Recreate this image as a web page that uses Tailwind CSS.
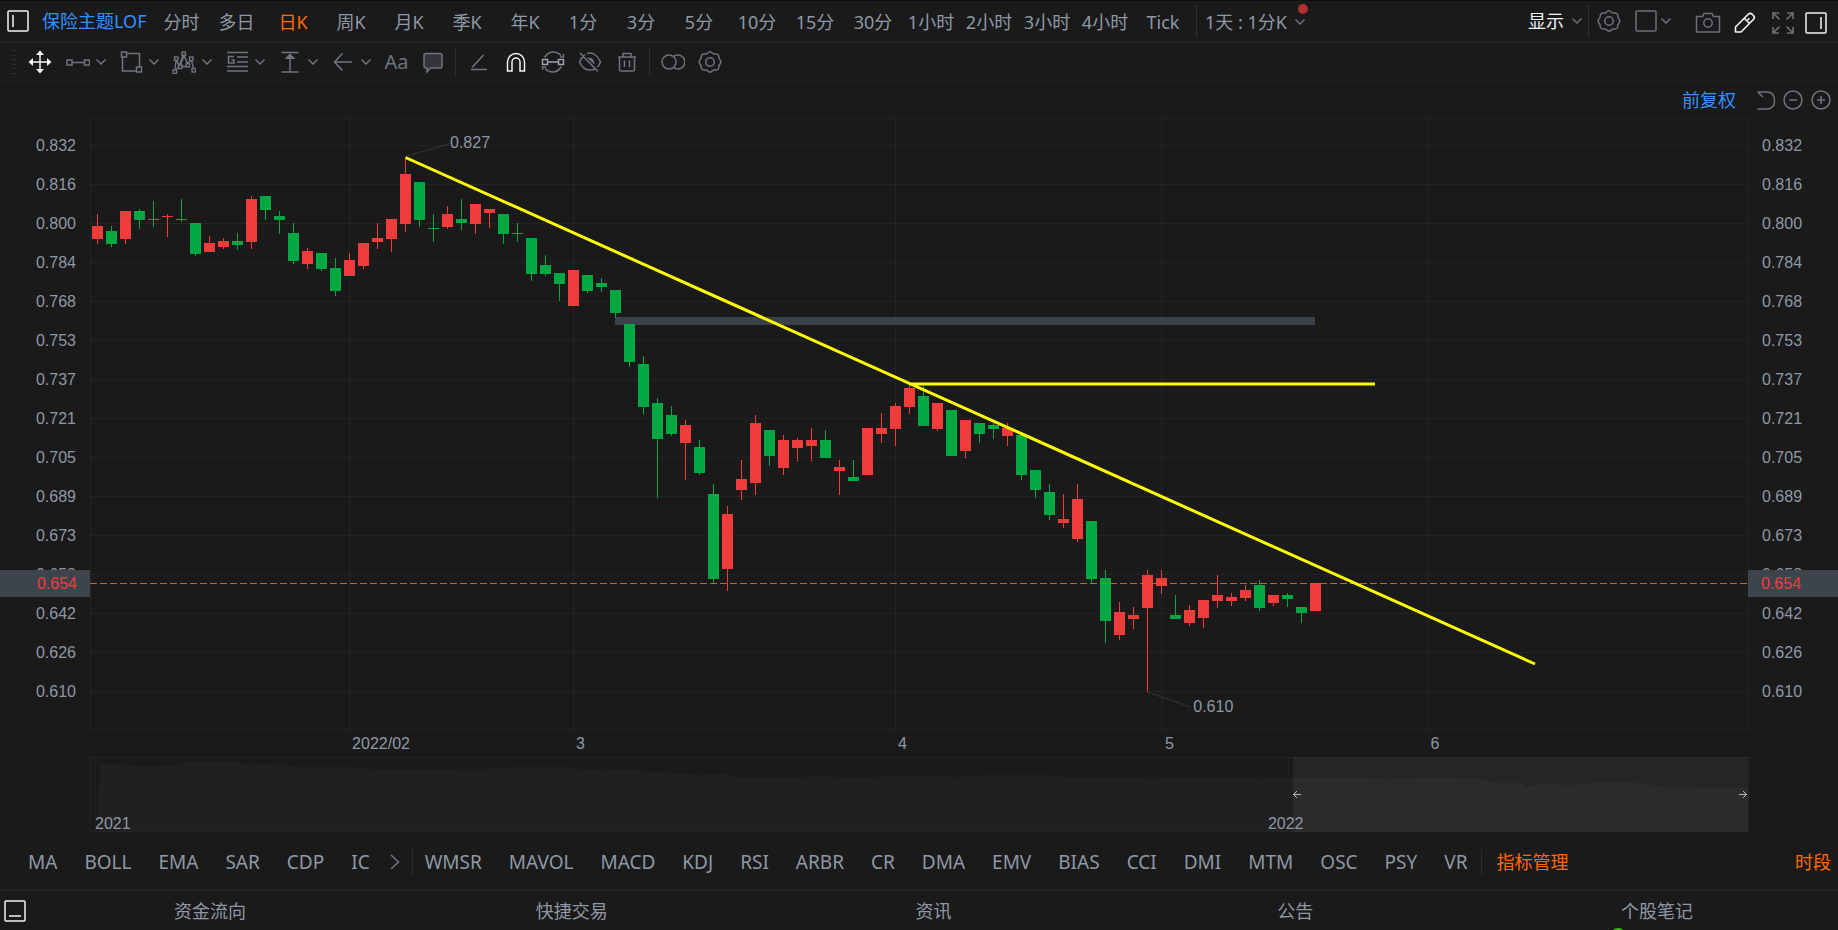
<!DOCTYPE html>
<html lang="zh-CN">
<head>
<meta charset="utf-8">
<title>保险主题LOF</title>
<script src="https://cdn.jsdelivr.net/npm/@tailwindcss/browser@4"></script>
</head>
<body class="min-h-screen overflow-x-hidden bg-[#1a1a1a] font-['Noto_Sans','Noto_Sans_CJK_SC',sans-serif] text-[18px] leading-6 text-[#8f98a5]">

<svg class="hidden" aria-hidden="true">
  <symbol id="chev" viewBox="0 0 10 6"><path d="M0.5 0.5 5 5 9.5 0.5" fill="none" stroke="currentColor" stroke-width="1.5"/></symbol>
  <symbol id="gear" viewBox="0 0 24 24"><g fill="none" stroke="currentColor" stroke-width="1.5"><circle cx="12" cy="12" r="4.2"/><path d="M9.6 3.2Q12 .4 14.4 3.2Q15.6 4.3 17.2 3.9Q20.6 3.6 20.8 7Q20.8 8.7 22 9.9Q23.6 12 22 14.1Q20.8 15.3 20.8 17Q20.6 20.4 17.2 20.1Q15.6 19.7 14.4 20.8Q12 23.6 9.6 20.8Q8.4 19.7 6.8 20.1Q3.4 20.4 3.2 17Q3.2 15.3 2 14.1Q.4 12 2 9.9Q3.2 8.7 3.2 7Q3.4 3.6 6.8 3.9Q8.4 4.3 9.6 3.2Z"/></g></symbol>
</svg>

<header class="flex h-[43px] items-center border-t border-b-2 border-t-[#0e0e0e] border-b-[#242424]">
  <button class="ml-[7px] shrink-0 text-[#f2f4f7]" aria-label="左侧面板"><svg class="size-[22px]" viewBox="0 0 22 22" fill="none" stroke="currentColor" stroke-width="1.5"><rect x="1" y="1" width="20" height="20" rx="1"/><path d="M6 5v12"/></svg></button>
  <a href="#" class="ml-[13px] w-[112px] shrink-0 whitespace-nowrap text-[#3391ff]">保险主题LOF</a>
  <nav class="flex shrink-0 pt-[2px] whitespace-nowrap">
    <button class="w-[55px]">分时</button><button class="w-[55px]">多日</button><button class="w-[58px] text-[#ff6a00]">日K</button><button class="w-[58px]">周K</button><button class="w-[58px]">月K</button><button class="w-[58px]">季K</button><button class="w-[58px]">年K</button><button class="w-[58px]">1分</button><button class="w-[58px]">3分</button><button class="w-[58px]">5分</button><button class="w-[58px]">10分</button><button class="w-[58px]">15分</button><button class="w-[58px]">30分</button><button class="w-[58px]">1小时</button><button class="w-[58px]">2小时</button><button class="w-[58px]">3小时</button><button class="w-[58px]">4小时</button><button class="w-[58px]">Tick</button>
  </nav>
  <span class="ml-1 h-8 w-px shrink-0 bg-[#303030]"></span>
  <button class="relative ml-2 flex shrink-0 items-center gap-2 pt-[2px] whitespace-nowrap">1天 : 1分K<svg class="h-[6px] w-[10px] text-[#6b707a]"><use href="#chev"/></svg><span class="absolute -top-1 right-[-3px] size-[10px] rounded-full bg-[#b03030]"></span></button>
  <div class="ml-auto flex shrink-0 items-center pr-[11px] text-[#6b707a]">
    <button class="flex items-center gap-2 whitespace-nowrap text-[#f2f4f7]">显示<svg class="h-[6px] w-[10px] text-[#6b707a]"><use href="#chev"/></svg></button>
    <span class="ml-[6px] h-8 w-px bg-[#303030]"></span>
    <button class="ml-2 block" aria-label="设置"><svg class="size-6"><use href="#gear"/></svg></button>
    <button class="ml-[14px] flex items-center gap-1" aria-label="布局"><svg class="size-[22px]" viewBox="0 0 22 22" fill="none" stroke="currentColor" stroke-width="1.5"><rect x="1" y="1" width="20" height="20" rx="1"/></svg><svg class="h-[6px] w-[10px]"><use href="#chev"/></svg></button>
    <button class="ml-6" aria-label="截图"><svg class="mt-1 h-[22px] w-[26px]" viewBox="0 0 26 22" fill="none" stroke="currentColor" stroke-width="1.5"><path d="M1.5 4.5h6L9 1.5h8l1.500 3h6v15.500h-23z"/><circle cx="13" cy="11" r="4.200"/></svg></button>
    <button class="ml-3 text-[#f2f4f7]" aria-label="画线"><svg class="mt-1 size-6" viewBox="0 0 24 24" fill="none" stroke="currentColor" stroke-width="1.6" stroke-linejoin="round"><path d="M2.500 21v-5L15.200 3.300q2-2 4 0l1.200 1.200q2 2 0 4L8 21zM11.500 7.500l4.700 4.700M14.500 9l1.800-1.800"/></svg></button>
    <button class="ml-[14px]" aria-label="全屏"><svg class="mt-1 size-6" viewBox="0 0 24 24" fill="none" stroke="currentColor" stroke-width="1.600"><path d="M2 8V2h6M2.500 2.500l6 6M16 2h6v6M21.500 2.500l-6 6M2 16v6h6M2.500 21.500l6-6M16 22h6v-6M21.500 21.500l-6-6"/></svg></button>
    <button class="ml-[10px] text-[#f2f4f7]" aria-label="右侧面板"><svg class="mt-1 size-[22px]" viewBox="0 0 22 22" fill="none" stroke="currentColor" stroke-width="1.500"><rect x="1" y="1" width="20" height="20" rx="1"/><path d="M16 5v12"/></svg></button>
  </div>
</header>

<div class="flex h-[39px] items-center border-b border-[#242424] text-[#6e737e]" role="toolbar" aria-label="画线工具">
  <svg class="ml-[10px] h-6 w-2 text-[#2b2b2b]" viewBox="0 0 8 24" stroke="currentColor"><path d="M1 .5h6M1 5.500h6M1 9.500h6M1 14.500h6M1 18.500h6M1 23.500h6"/></svg>
  <button class="ml-[10px] w-[33px] text-[#f2f4f7]" aria-label="移动"><svg class="size-6" viewBox="0 0 24 24"><path d="M12 3v18M3 12h18" stroke="currentColor" stroke-width="1.500"/><path d="M12 .5 16 5H8zM12 23.500 8 19h8zM.5 12 5 8v8zM23.500 12 19 16V8z" fill="currentColor"/></svg></button>
  <button class="flex w-[53px] items-center gap-[6px] pl-[5px]" aria-label="线段"><svg class="size-6" viewBox="0 0 24 24" fill="none" stroke="currentColor" stroke-width="1.500"><rect x="1" y="10" width="5" height="5"/><rect x="18.500" y="10" width="5" height="5"/><path d="M6 12.500h12.500"/></svg><svg class="h-[6px] w-[10px]"><use href="#chev"/></svg></button>
  <button class="flex w-[53px] items-center gap-[6px] pl-[5px]" aria-label="形状"><svg class="size-6" viewBox="0 0 24 24" fill="none" stroke="currentColor" stroke-width="1.500"><rect x="2.500" y="2" width="5" height="5"/><rect x="17.500" y="17" width="5" height="5"/><path d="M7.500 3.500h13V17M3.500 7v14h14"/></svg><svg class="h-[6px] w-[10px]"><use href="#chev"/></svg></button>
  <button class="flex w-[53px] items-center gap-[6px] pl-[5px]" aria-label="形态"><svg class="size-6" viewBox="0 0 24 24" fill="none" stroke="currentColor" stroke-width="1.400"><rect x="1" y="20" width="3.500" height="3.500"/><rect x="2.500" y="7" width="3.500" height="3.500"/><rect x="6.500" y="15" width="3.500" height="3.500"/><rect x="10" y="2" width="3.500" height="3.500"/><rect x="14" y="13.500" width="3.500" height="3.500"/><rect x="17.500" y="7" width="3.500" height="3.500"/><rect x="20" y="18.500" width="3.500" height="3.500"/><path d="M3 20 4 10.500l3.500 4.500L11 5.500M8.500 15l3.500-9.500 3.500 8 3-3M19.500 10.500l2 8M4 20l3-3M9.500 16.500h5"/></svg><svg class="h-[6px] w-[10px]"><use href="#chev"/></svg></button>
  <button class="flex w-[53px] items-center gap-[6px] pl-[5px]" aria-label="江恩"><svg class="size-6" viewBox="0 0 24 24" fill="none" stroke="currentColor" stroke-width="1.500"><path d="M2 2.500h21M12 7h11M12 12h11M2 16.500h21M2 21h21M9 6.500H3.500v6.500H9v-3H6.500"/></svg><svg class="h-[6px] w-[10px]"><use href="#chev"/></svg></button>
  <button class="flex w-[53px] items-center gap-[6px] pl-[5px]" aria-label="测量"><svg class="size-6" viewBox="0 0 24 24"><path d="M3.500 2.500h17M3.500 22h17M12 5v17" fill="none" stroke="currentColor" stroke-width="1.500"/><path d="M12 3.500 17.500 9h-11z" fill="currentColor"/></svg><svg class="h-[6px] w-[10px]"><use href="#chev"/></svg></button>
  <button class="flex w-[53px] items-center gap-[6px] pl-[5px]" aria-label="箭头"><svg class="size-6" viewBox="0 0 24 24" fill="none" stroke="currentColor" stroke-width="1.600"><path d="M21 12H3.500M11.500 3.500 3.500 12l8 8.500"/></svg><svg class="h-[6px] w-[10px]"><use href="#chev"/></svg></button>
  <button class="w-[35px] text-[20px]">Aa</button>
  <button class="flex w-[37px] justify-center" aria-label="标注"><svg class="size-6" viewBox="0 0 24 24" fill="#33353a" stroke="currentColor" stroke-width="1.500"><path d="M5 3.500h14q2 0 2 2V16q0 2-2 2h-9.500L6 22v-4H5q-2 0-2-2V5.500q0-2 2-2z"/></svg></button>
  <span class="mx-1 h-[30px] w-px bg-[#2b2b2b]"></span>
  <button class="flex w-[37px] justify-center" aria-label="画笔"><svg class="size-6" viewBox="0 0 24 24" fill="none" stroke="currentColor" stroke-width="1.600"><path d="M16.500 5 5 17.500M4 19.500h16"/></svg></button>
  <button class="flex w-[37px] justify-center text-[#f2f4f7]" aria-label="磁吸"><svg class="size-6" viewBox="0 0 24 24" fill="none" stroke="currentColor" stroke-width="1.500"><path d="M3.500 21v-9a8.500 8.500 0 0 1 17 0v9h-4.500v-9a4 4 0 0 0-8 0v9z"/></svg></button>
  <button class="flex w-[37px] justify-center" aria-label="连续画线"><svg class="size-6" viewBox="0 0 24 24" fill="none" stroke="currentColor" stroke-width="1.500"><path d="M3.500 7.500Q7 2 12 2t8 3.500M22.500 4v3h-3.500M20.500 16.500Q17 22 12 22t-8-3.500M1.500 20v-3H5"/><g stroke="#9aa1ac"><rect x="1.500" y="9.500" width="5" height="5"/><rect x="17.500" y="9.500" width="5" height="5"/><path d="M6.500 12h11"/></g></svg></button>
  <button class="flex w-[37px] justify-center" aria-label="隐藏画线"><svg class="size-6" viewBox="0 0 24 24" fill="none" stroke="currentColor" stroke-width="1.500"><path d="M7 4.500Q3 8 1.500 12q3.500 8 10.500 8 3 0 5-1M9 3.500Q12 2.500 16 4q4.500 3 6.500 8-1 3-3 5M2 3l18 18.500"/><path d="M11 8.500q4 0 4.500 4z" fill="currentColor"/></svg></button>
  <button class="flex w-[37px] justify-center" aria-label="删除"><svg class="size-6" viewBox="0 0 24 24" fill="none" stroke="currentColor" stroke-width="1.500"><path d="M3 7h18M8 7V3.500h8V7M4.500 7v12.500q0 1.500 1.500 1.500h12q1.500 0 1.500-1.500V7M9.500 10.500V17M14.500 10.500V17"/></svg></button>
  <span class="mx-1 h-[30px] w-px bg-[#2b2b2b]"></span>
  <button class="flex w-[37px] justify-center" aria-label="对比"><svg class="size-6" viewBox="0 0 24 24" fill="none" stroke="currentColor" stroke-width="1.500"><circle cx="8" cy="12" r="7"/><path d="M12.500 6.500a7 7 0 1 1 0 11"/></svg></button>
  <button class="flex w-[37px] justify-center" aria-label="画线设置"><svg class="size-6"><use href="#gear"/></svg></button>
</div>

<main>
  <div class="flex h-9 items-center justify-end pr-[7px] text-[#6e737e]">
    <a href="#" class="mr-5 text-[#3391ff]">前复权</a>
    <button class="mr-[7px]" aria-label="撤销"><svg class="h-5 w-5" viewBox="0 0 20 20" fill="none" stroke="currentColor" stroke-width="1.500"><path d="M1.500 2h9q8 0 8 8.500 0 8.500-8 8.500h-9M2 2l5 5"/></svg></button>
    <button class="mr-2" aria-label="缩小"><svg class="size-5" viewBox="0 0 20 20" fill="none" stroke="currentColor" stroke-width="1.500"><circle cx="10" cy="10" r="9"/><path d="M6 10h8"/></svg></button>
    <button aria-label="放大"><svg class="size-5" viewBox="0 0 20 20" fill="none" stroke="currentColor" stroke-width="1.500"><circle cx="10" cy="10" r="9"/><path d="M6 10h8M10 6v8"/></svg></button>
  </div>

  <section class="flex font-['Liberation_Sans',sans-serif] text-[16px]" aria-label="K线图">
    <div class="relative w-[90px] shrink-0 pt-2 pr-[14px] text-right leading-[39px]">
      <div>0.832</div><div>0.816</div><div>0.800</div><div>0.784</div><div>0.768</div><div>0.753</div><div>0.737</div><div>0.721</div><div>0.705</div><div>0.689</div><div>0.673</div><div>0.658</div><div>0.642</div><div>0.626</div><div>0.610</div>
      <div class="absolute top-[452px] left-0 h-[27px] w-full bg-[#3d444b] pr-[13px] leading-[27px] text-[#f23c3c]">0.654</div>
    </div>
    <div class="relative min-w-0 flex-1">
      <svg id="chart" class="block h-[612px] w-full" viewBox="90 118 1659 612" preserveAspectRatio="none">
        <g id="grid" fill="#242424"></g>
        <rect x="615" y="317" width="700" height="8" fill="#3b4148"/>
        <g id="candles"></g>
        <path d="M90 583.500H1748" stroke="#c9651b" stroke-dasharray="7 3"/>
        <g fill="none" stroke="#3a3a3a"><path d="M407 156 449 144" stroke-dasharray="4 1"/><path d="M1147 692 1191 707" stroke-dasharray="4 1"/></g>
        <path d="M405.500 157.500 1535 664M911 384H1375" stroke="#ffff00" stroke-width="3"/>
      </svg>
      <span class="absolute top-[13px] left-[21.7%]">0.827</span>
      <span class="absolute top-[577px] left-[66.5%]">0.610</span>
    </div>
    <div class="relative w-[89px] shrink-0 pt-2 pl-[13px] leading-[39px]">
      <div>0.832</div><div>0.816</div><div>0.800</div><div>0.784</div><div>0.768</div><div>0.753</div><div>0.737</div><div>0.721</div><div>0.705</div><div>0.689</div><div>0.673</div><div>0.658</div><div>0.642</div><div>0.626</div><div>0.610</div>
      <div class="absolute top-[452px] right-0 -left-px h-[27px] bg-[#3d444b] pl-[13px] leading-[27px] text-[#f23c3c]">0.654</div>
    </div>
  </section>

  <div class="mr-[89px] ml-[90px] grid h-[27px] grid-cols-[15.8%_13.5%_19.4%_16.1%_16%_1fr] items-center font-['Liberation_Sans',sans-serif] text-[16px]">
    <span></span><span>2022/02</span><span>3</span><span>4</span><span>5</span><span>6</span>
  </div>

  <section class="relative mr-[89px] ml-[90px] font-['Liberation_Sans',sans-serif] text-[16px]" aria-label="缩略图">
    <svg class="block h-[75px] w-full" viewBox="90 757 1659 75" preserveAspectRatio="none">
      <path d="M90.500 757.500h1658v74h-1658z" fill="none" stroke="#242424"/>
      <path d="M95.500 758v73M1288.500 758v73" stroke="#212121"/>
      <path d="M97 831 100 763 115 764 128 765 135 767 160 766 175 766 182 763 208 762 215 763 235 762 250 765 278 763 290 767 350 767 385 770 450 769 480 769 510 767 570 767 580 769 605 771 625 770 670 773 700 775 728 774 740 778 780 778 822 776 860 778 905 775 955 777 985 775 1050 775 1070 778 1160 779 1210 777 1260 779 1288 778 1335 778 1360 777 1385 779 1440 777 1480 779 1498 783 1520 783 1526 787 1540 784 1575 785 1598 782 1640 783 1665 787 1748 788V831z" fill="#202020"/>
      <rect x="1293" y="757" width="455" height="75" fill="#fff" fill-opacity=".05"/>
      <path d="M1301 794.500h-7.500M1297 791l-3.500 3.500 3.500 3.500M1739 794.500h7.500M1743 791l3.500 3.500-3.500 3.500" fill="none" stroke="#b5bac2"/>
    </svg>
    <span class="absolute bottom-[-4px] left-[5px]">2021</span>
    <span class="absolute bottom-[-4px] left-[71%]">2022</span>
  </section>
</main>

<nav class="flex h-[59px] items-center border-b-2 border-[#242424] pt-[2px] whitespace-nowrap" aria-label="指标">
  <div class="flex gap-[27px] pl-[28px] text-[19px]">
    <button>MA</button><button>BOLL</button><button>EMA</button><button>SAR</button><button>CDP</button><button>IC</button>
  </div>
  <button class="ml-5" aria-label="更多"><svg class="h-4 w-[10px] text-[#6e737e]" viewBox="0 0 10 16" fill="none" stroke="currentColor" stroke-width="1.600"><path d="M1 1l7.500 7L1 15"/></svg></button>
  <span class="ml-3 h-[26px] w-px bg-[#2b2b2b]"></span>
  <div class="flex gap-[27px] pl-3 text-[19px]">
    <button>WMSR</button><button>MAVOL</button><button>MACD</button><button>KDJ</button><button>RSI</button><button>ARBR</button><button>CR</button><button>DMA</button><button>EMV</button><button>BIAS</button><button>CCI</button><button>DMI</button><button>MTM</button><button>OSC</button><button>PSY</button><button>VR</button>
  </div>
  <span class="ml-[14px] h-[26px] w-px bg-[#2b2b2b]"></span>
  <button class="ml-[14px] text-[#ff6a00]">指标管理</button>
  <button class="mr-[7px] ml-auto text-[#ff6a00]">时段</button>
</nav>

<footer class="relative flex h-[39px] items-center overflow-hidden">
  <button class="ml-1 w-[25px] text-[#f2f4f7]" aria-label="底部面板"><svg class="size-[22px]" viewBox="0 0 22 22" fill="none" stroke="currentColor" stroke-width="1.500"><rect x="1" y="1" width="20" height="20" rx="1"/><path d="M5 16h12"/></svg></button>
  <div class="grid flex-1 grid-cols-5">
    <button>资金流向</button><button>快捷交易</button><button>资讯</button><button>公告</button><button>个股笔记</button>
  </div>
  <span class="absolute -bottom-2 left-[87.700%] h-[10px] w-3 rounded-full bg-[#35a815]"></span>
</footer>

<script>
  // Each candle: colour, high, body top, body bottom, low (chart units).
  const data = `r214,226,239,244 g226,231,244,247 r211,211,239,244 g209,211,220,229 g201,219,220,227 r214,216,217,237 g199,219,220,222 g223,223,254,256 r236,243,252,252 r238,241,247,249 g233,241,245,250 r196,199,242,249 g196,196,210,220 g211,216,220,234 g223,233,261,264 r248,251,264,269 g253,253,269,271 g258,268,291,296 r253,260,276,276 r243,243,266,269 r223,238,242,249 r219,219,239,252 r158,174,224,232 g182,182,220,227 g214,228,229,242 r206,214,227,229 g199,219,223,230 r204,204,224,234 r209,209,213,228 g214,214,234,244 g223,233,234,242 g238,238,274,281 g255,265,274,276 g273,273,284,301 r270,270,306,306 g275,275,291,293 g278,283,287,292 g290,290,313,318 g324,324,362,367 g356,364,407,414 g398,403,439,498 g406,415,434,436 r420,425,443,480 g440,447,473,475 g484,494,579,583 r506,514,569,591 r460,479,490,500 r415,423,483,495 g430,430,456,466 r435,440,468,475 r438,440,448,461 r428,440,446,461 g430,440,458,458 r460,467,471,495 g460,477,481,481 r428,428,475,475 r413,428,434,443 r403,406,429,446 r384,388,407,414 g386,396,426,426 r403,403,429,431 g410,410,456,456 r420,420,451,458 g423,423,434,443 g422,425,429,439 r423,428,436,446 g435,435,475,480 g470,470,490,498 g484,492,515,520 r494,519,523,528 r484,499,539,542 g521,521,579,583 g570,578,621,643 r602,612,635,640 r607,615,619,629 r570,575,608,692 r570,578,586,594 g595,615,619,619 r605,610,623,626 r600,600,618,628 r575,595,601,608 r593,597,601,606 r585,590,598,601 g580,585,608,611 r595,595,603,606 g593,595,599,607 g607,607,613,623 r583,583,611,611`.split(' ');
  const rect = (x, y, w, h, f) => `<rect x="${x}" y="${y}" width="${w}" height="${h}"${f ? ` fill="${f}"` : ''}/>`;
  document.getElementById('candles').innerHTML = data.map((d, i) => {
    const f = d[0] === 'r' ? '#f23c3c' : '#00a843';
    const [hi, top, bot, lo] = d.slice(1).split(',').map(Number);
    return rect(97 + 14 * i, hi, 1, lo - hi, f) + rect(92 + 14 * i, top, 11, bot - top, f);
  }).join('');
  let g = '';
  for (let y = 145; y <= 691; y += 39) g += rect(90, y, 1659, 1);
  for (const y of [118, 729]) g += rect(90, y, 1659, 1);
  for (const x of [90, 349, 573, 895, 1161, 1427, 1748]) g += rect(x, 118, 1, 612);
  document.getElementById('grid').innerHTML = g;
</script>
</body>
</html>
